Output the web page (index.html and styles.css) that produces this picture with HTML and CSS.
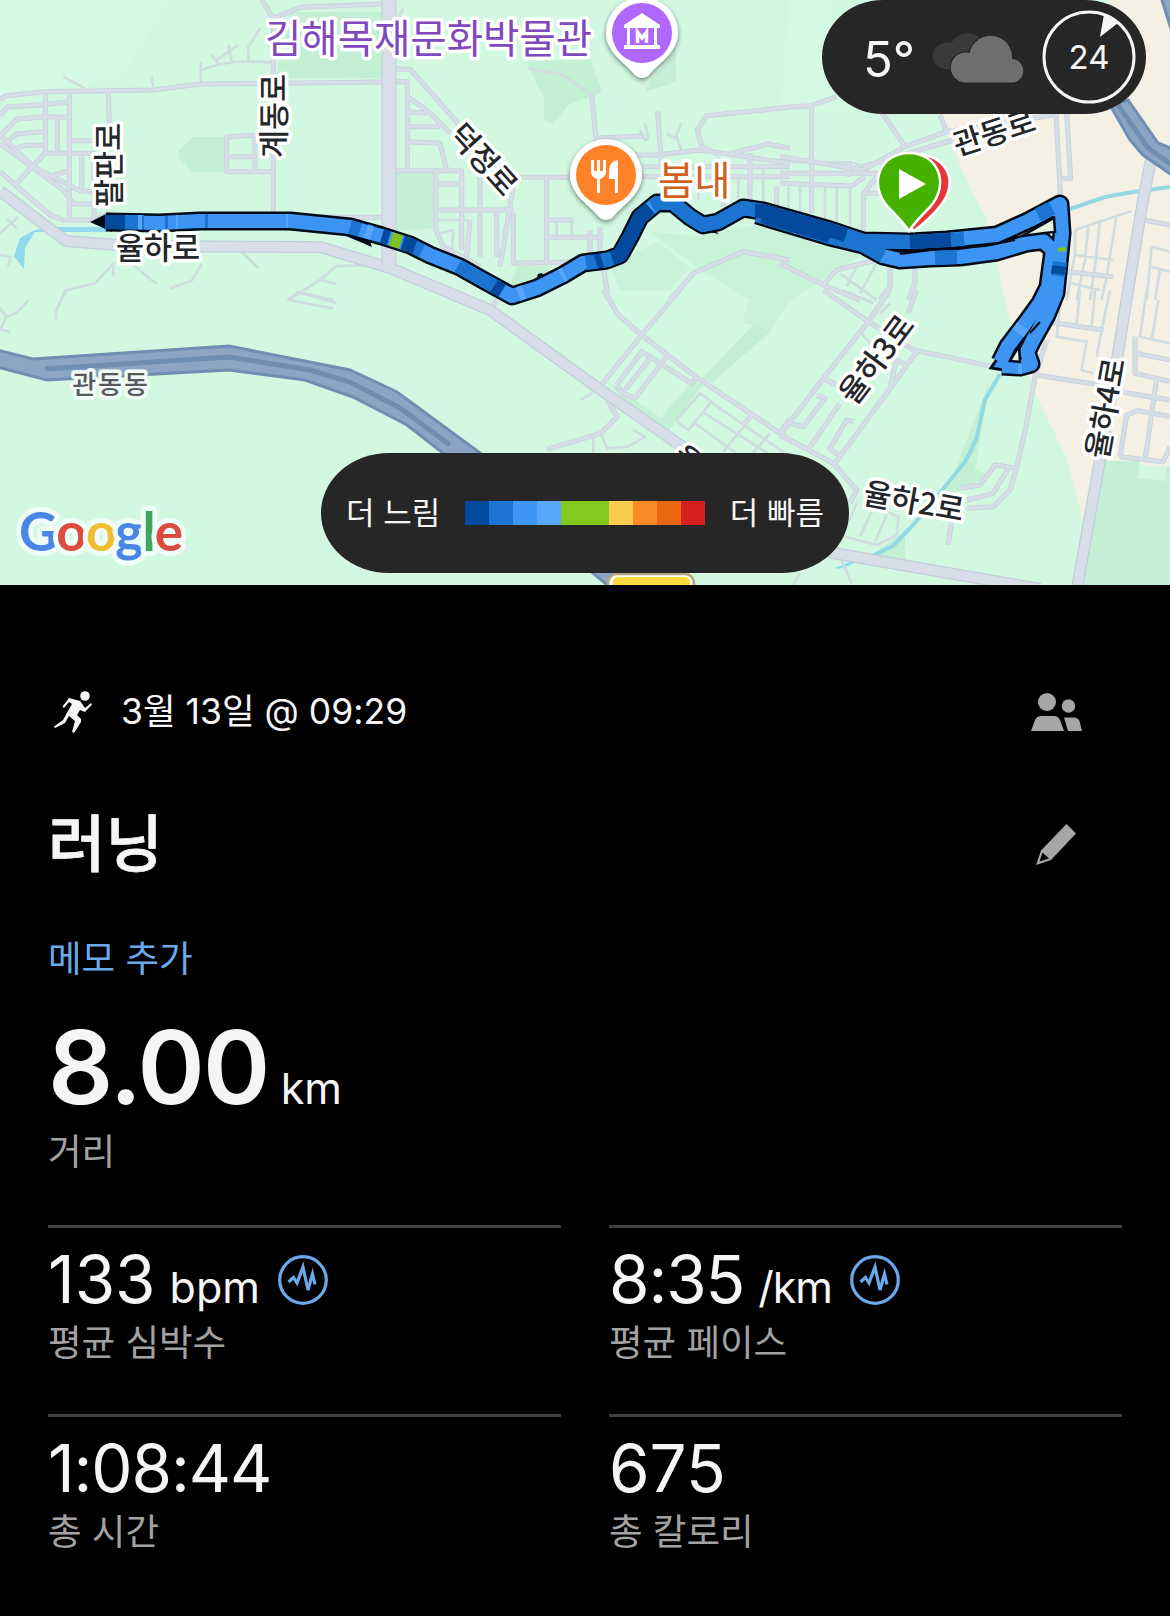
FILE: index.html
```html
<!DOCTYPE html>
<html lang="ko">
<head>
    <meta charset="UTF-8">
    <meta name="viewport" content="width=device-width, initial-scale=1.0">
    <title>러닝 | 3월 13일</title>
    <link rel="stylesheet" href="styles.css">
</head>
<body>
    <section class="map">
        <svg class="map-canvas" viewBox="0 0 1170 585">
            <defs>
                <filter id="pin-shadow" x="-20%" y="-20%" width="140%" height="150%">
                    <feDropShadow dx="0" dy="2" stdDeviation="2.5" flood-color="#000" flood-opacity=".5"/>
                </filter>

                <!-- side streets, one group per map tile -->
                <g id="streets">
                    <g transform="scale(.33333)">
                        <path d="M785 0L820 55V640M820 55L900 22L1150 12M0 300L15 288L130 275L460 270L600 252L1150 246M325 278L328 380M136 275V460M208 275V650M0 345L25 320L130 314L205 306M0 408L50 358L130 350L205 352M172 355V460M15 430L50 402L130 395M35 445L80 436H130M50 550L135 460H290M208 422H290M0 405L100 500L240 572L290 575M0 430L190 570L220 612H290M245 470V570M150 530L205 512M0 515L150 645L190 660H290M282 480V660L330 640M820 515H680V410L780 405M765 410V515M685 470H765M900 652H1145M1190 205H1200M1190 512H1200"/>
                    </g>
                    <g transform="translate(390 0) scale(.33333)">
                        <path d="M20 208H60L90 240L230 400M20 245H52V512M52 290L110 330L180 400M52 335L110 340M52 380H150M52 425L150 430L170 510M20 512H215V750M270 530V770M138 512V690L160 740L270 800M138 552H210M138 630H370M370 560L330 800M320 640V770M240 660L230 770M370 640V790L580 785M385 532H545M470 532V785M470 660H550M470 712H640M600 690V780M605 285L618 420M610 415L760 408M803 335L815 500M720 465H800L930 450L1200 490M1200 322L950 347L922 390L935 440L990 465M1080 460V610M1020 462L1135 432L1200 445M760 500H1200M740 530H1200M1000 560V620M1160 560V620M840 900L910 820L1060 755L1200 780M640 800L655 900M630 680V760"/>
                    </g>
                    <g transform="translate(780 0) scale(.33333)">
                        <path d="M0 323L95 317V640M95 317L170 290M300 330L375 440L250 510L0 470M375 440L500 395L480 345M500 395L820 345M0 520H300L250 580V700M0 550L215 558L255 530M250 580H300M205 485V530M250 500L520 420M828 340L842 600M860 340L872 535H845M0 790L130 855L240 900M130 855L170 810L330 770M330 770V860L300 900M405 780V850L385 900M860 815L1000 830M1090 660L1170 675"/>
                    </g>
                    <g transform="translate(390 290) scale(.33333)">
                        <path d="M640 0L685 75L755 135L920 262L1200 450M870 0L755 135L630 290M680 285L755 185L905 280L920 262M680 285L700 310L735 325L830 200M705 300L780 205M640 310L682 380L632 430L470 478M320 30L300 60M1085 375L1060 405M1170 430L1200 385"/>
                    </g>
                    <g transform="translate(780 290) scale(.33333)">
                        <path d="M330 0L265 95L130 265L0 435M410 0L385 70M130 0L265 95L400 180L640 230M410 185L320 310L165 520M180 340L80 485M0 435L160 520L230 600L210 640M110 315L135 325L70 410L25 400M220 395L200 390L150 475L175 495M130 265L190 295M330 290L350 210L380 225M800 150L765 260L740 400L710 535L690 600L640 650L560 655M710 535L645 525L600 585L540 595M685 535L640 610L560 630M515 690L505 765M770 255L960 285M1020 305L1170 330M820 98L970 120M1070 190L1170 210M1065 140V250L1170 275M1130 265L1095 510M1020 500L1150 515L1170 470M1020 500L1040 375L1075 362L1170 380"/>
                    </g>
                </g>

                <g id="lanes">
                    <g transform="scale(.33333)">
                        <path d="M190 230L255 265M455 230L460 262M602 185V245M602 212Q680 175 815 188M635 165L655 190M650 180L715 135M685 135L695 185M745 180V140L780 85M0 700L55 650M0 765L30 770L25 800M185 900L200 870L285 850L340 790V830M400 795L470 852M510 865L575 842L605 792M725 755L775 805M1120 795L1010 798L960 840L865 900M960 840L1010 852M890 875L1000 900M20 655L50 685"/>
                    </g>
                    <g transform="translate(390 0) scale(.33333)">
                        <path d="M415 205L520 225L605 285M750 390L765 420L775 415L765 370M830 400L855 415L875 368M860 410L875 455M10 85L40 25M130 660H230M150 700L190 690L185 750M500 660V705M545 660V705M880 610L860 500M925 600V560M1045 620V540M1120 620V500"/>
                    </g>
                    <g transform="translate(780 0) scale(.33333)">
                        <path d="M25 560V630M60 560V640M135 560V660M170 560V670M210 560V690M0 485L215 487L250 500M885 690L1055 633M885 690V760L860 900M925 675L915 780L890 900M960 660L945 800L930 900M1010 645L980 830L965 900M885 765L1000 780M875 850L960 870M1115 740L1170 755M1115 740L1100 900M1110 800L1170 815M1140 810L1125 900M180 820L290 900M230 800L200 860M290 790L240 880"/>
                    </g>
                    <g transform="translate(0 290) scale(.33333)">
                        <path d="M0 120L20 80L0 55M20 80L50 68L85 32M0 118L32 126M195 0L168 65V90M895 5L865 30L1000 55M890 5L1010 40"/>
                    </g>
                    <g transform="translate(390 290) scale(.33333)">
                        <path d="M570 330L610 308M610 440V490M635 435L650 475L715 470L765 440L730 420M860 390L930 310L965 335L895 420L860 395M960 335L1200 500M935 365L1150 500M915 400L1040 490M1065 405L1000 485M1140 430L1080 500"/>
                    </g>
                    <g transform="translate(780 290) scale(.33333)">
                        <path d="M190 0L280 40M240 125L270 160M300 70L330 40M845 0L830 140L915 155M900 0L890 100M945 0L935 110M990 0L965 120L950 200M920 150L905 240L940 250M1100 0L1080 140L1170 160M1135 30L1115 150M195 740L290 765L350 735L355 680L310 660M240 740L275 665M285 755L320 675M60 850L40 885M180 800L215 880M230 640L195 720"/>
                    </g>
                </g>
            </defs>

            <rect class="land" width="1170" height="585"/>
            <path class="woods soft" d="M0 0H170L120 80L0 95ZM790 0H830L850 110H780Z"/>
            <path class="town" d="M1110 0H1170V467L1100 462L1083 523L1077 497L1067 460L1047 417L1035 393L1013 330L1002 290L997 263L987 220L970 187L953 150L937 110Z"/>
            <path class="woods" d="M290 12L382 12V78H276ZM193 137H224V172H193L179 158V150ZM527 62L590 58L602 92L568 105L553 124L544 120V98L531 72ZM650 82L676 50V82L645 92ZM396 171H434V228L397 231ZM510 285L517 266H550L537 285ZM760 318L790 295L770 332L712 383L702 378ZM610 384L620 389L660 418L692 382L703 384L667 433L625 402ZM1101 461H1140L1138 478L1164 481L1167 467H1170V585H1082ZM990 380L975 470L990 475L940 500L955 470ZM905 530L905 560L860 565Z"/>
            <path class="woods light" d="M610 264L658 242L690 268L670 290H620ZM650 232L700 236L755 225L860 256L790 300L770 330L742 322L750 300L700 270Z"/>

            <path class="water" d="M55 227H108V232H52L35 232L25 248L24 269L14 256L20 238L35 230Z"/>
            <path class="stream" d="M1067 210L1105 197L1133 192L1170 187M1000 374L985 400L976 440L965 462L915 523L893 546L870 557"/>
            <path class="water" d="M835 568L872 553L848 566L837 569Z"/>

            <use href="#lanes" class="lane"/>
            <use href="#streets" class="street-edge"/>
            <use href="#streets" class="street"/>

            <g class="avenue-edge">
                <path d="M0 191L66 241L130 246L320 247L390 268L490 310L598 388L690 452L770 525L833 553L1040 589"/>
                <path d="M1152 155L1143 200L1127 297L1118 353L1100 460L1077 588"/>
            </g>
            <g class="avenue">
                <path d="M0 191L66 241L130 246L320 247L390 268L490 310L598 388L690 452L770 525L833 553L1040 589"/>
                <path d="M1152 155L1143 200L1127 297L1118 353L1100 460L1077 588"/>
            </g>
            <path class="trunk-edge" d="M389 -2V266"/>
            <path class="trunk" d="M389 -4V268"/>

            <g class="highway">
                <path d="M-3 350L33 359L229 346L350 370L397 392L480 453L625 573V600L593 573L443 453L407 425L353 397L305 380L229 370L47 380L-3 367Z"/>
                <path class="highway-gap" d="M45 369L229 357L310 370L350 382L400 408L450 445"/>
                <path d="M1110 105L1130 140L1143 155L1175 177V150L1158 143L1128 100ZM1161 -3L1173 35V-3Z"/>
                <path class="highway-gap" d="M1118 105L1148 148L1172 165"/>
            </g>

            <rect class="shield-edge" x="608" y="574" width="86" height="40" rx="9"/>
            <rect class="shield" x="613" y="577" width="77" height="40" rx="5"/>

            <!-- run track, coloured by pace -->
            <path class="track-edge" d="M90 222L108 213L112 232ZM1060 196L1068 202L1052 208ZM346 236L372 247L369 238ZM538 274L542 273L547 281L535 284ZM705 231L719 234L710 226Z"/>
            <g class="track-edge line">
                <path d="M106 222L160 223L200 221L290 221L350 227L382 236L410 245L430 255L460 267L483 280L512 296L537 288L563 275L583 263L607 260L620 255L630 237L640 217L657 203L673 203L690 217L703 225L718 222L743 208L763 211L830 230L863 241L910 242L947 240L997 235L1030 220L1060 204L1062 233L1058 273L1056 293L1047 315L1033 340L1027 352L1031 364L1020 367L1002 366"/>
                <path d="M757 215L830 237L863 245L883 256L900 260L930 258L960 257L997 252L1027 243L1043 241L1053 250L1048 287L1040 303L1024 325L1008 346L1000 362"/>
            </g>
            <path class="track-tip" d="M991 368L1001 353L1013 360L1010 371Z"/>
            <g class="track">
                <path d="M106 222L160 223L200 221L290 221L350 227L382 236L410 245L430 255L460 267L483 280L512 296L537 288L563 275L583 263L607 260L620 255L630 237L640 217L657 203L673 203L690 217L703 225L718 222L743 208L763 211L830 230L863 241L910 242L947 240L997 235L1030 220L1060 204L1062 233L1058 273L1056 293L1047 315L1033 340L1027 352L1031 364L1020 367L1002 366"/>
                <path d="M757 215L830 237L863 245L883 256L900 260L930 258L960 257L997 252L1027 243L1043 241L1053 250L1048 287L1040 303L1024 325L1008 346L1000 362"/>
            </g>
            <g class="track pace-2">
                <path d="M120 222L144 222M165 223L168 223M205 221L208 221M350 227L360 230M402 243L410 245L422 251M458 266L483 280L498 288M586 263L607 260L620 255M652 206L657 203L673 203L690 217L703 225L718 222L743 208L763 211L830 230L863 241L912 242M757 215L830 237L863 245L883 256M935 258L957 257M1038 215L1052 208M1060 262L1058 276M950 240L964 239"/>
            </g>
            <g class="track pace-1">
                <path d="M105 222L125 222M382 236L389 238M403 243L415 247M494 286L502 291M596 262L602 260M612 258L620 255L630 237L640 217L650 208M755 211L763 211L830 230L846 235M762 216L830 236M910 242L951 240M1059 266L1058 274"/>
            </g>
            <g class="track pace-4">
                <path d="M138 222L142 222M176 222L178 222M286 221L288 221M366 231L372 233M518 294L524 292M561 276L565 274M1018 333L1023 326M1018 367L1022 367"/>
            </g>
            <path class="track pace-5" d="M391 239L401 242"/>
            <path class="track pace-5 thin" d="M1058 250L1066 249"/>
            <path class="track-edge thin" d="M900 254L940 249L985 246L1015 240M1040 322L1030 333"/>
            <path class="gap" d="M1054 218L1055 232L1045 233L1022 236Z"/>
            <path class="gap" d="M1010 361L1019 346L1020 362Z"/>

            <g class="label">
                <text class="poi museum" x="265" y="53">김해목재문화박물관</text>
                <text class="poi food" x="658" y="195">봄내</text>
                <text class="road" transform="translate(273 116) rotate(-90)" dy=".38em">계동로</text>
                <text class="road" transform="translate(108 165) rotate(-90)" dy=".38em">팔판로</text>
                <text class="road" transform="translate(158 247) " dy=".38em">율하로</text>
                <text class="road" transform="translate(484 159) rotate(48)" dy=".38em">덕정로</text>
                <text class="road" transform="translate(994 132) rotate(-18)" dy=".38em">관동로</text>
                <text class="road" transform="translate(876 359) rotate(-53)" dy=".38em">율하3로</text>
                <text class="road" transform="translate(1105 408) rotate(-80)" dy=".38em">율하4로</text>
                <text class="road" transform="translate(914 501) rotate(10)" dy=".38em">율하2로</text>
                <text class="road" transform="translate(688 460) rotate(40)" dy=".38em">율</text>
                <text class="district" transform="translate(111 384)" dy=".38em">관동동</text>
            </g>

            <g transform="translate(642 33)">
                <path class="pin" filter="url(#pin-shadow)" d="M-36 0A36 36 0 0 1 36 0C36 20 14 32 7 42Q0 48 -7 42C-14 32 -36 20 -36 0Z"/>
                <circle class="pin-museum" r="30"/>
                <path fill="#fff" d="M0 -20L18 -8V-5H15V12H18V16H-18V12H-15V-5H-18V-8ZM-12 -5V12H12V-5Z" fill-rule="evenodd"/>
                <path class="pin-line" d="M-4.500 10V-1L0 5L4.500 -1V10"/>
            </g>
            <g transform="translate(606 175)">
                <path class="pin" filter="url(#pin-shadow)" d="M-36 0A36 36 0 0 1 36 0C36 20 14 32 7 42Q0 48 -7 42C-14 32 -36 20 -36 0Z"/>
                <circle class="pin-food" r="30"/>
                <path fill="#fff" d="M-15 -15H-12V-4H-9V-15H-6V-4H-3V-15H0V-3Q0 2 -6 4V18H-9V4Q-15 2 -15 -3ZM12 -15V18H9V4H3V-5Q4 -14 12 -15Z"/>
            </g>
            <g class="start">
                <path class="finish-pin" d="M914 231L886 203C871 183 884 154 915 154S960 181 941 205Q931 218 914 231Z"/>
                <path class="start-pin" d="M909 231Q903 222 888 207C867 183 881 153 909 153S951 183 930 207Q915 222 909 231Z"/>
                <path fill="#fff" d="M899 169V199L926 184Z"/>
            </g>

            <text class="google" x="19" y="551" textLength="164"><tspan class="g-blue">G</tspan><tspan class="g-red">o</tspan><tspan class="g-yellow">o</tspan><tspan class="g-blue">g</tspan><tspan class="g-green">l</tspan><tspan class="g-red">e</tspan></text>
        </svg>

        <div class="weather">
            <span class="temp">5°</span>
            <svg class="clouds" viewBox="0 0 94 54" width="94" height="54">
                <path fill="#3a3a3a" d="M14 39A13 13 0 0 1 13 13Q16 12 19 13A19 19 0 0 1 54 18L30 39Z"/>
                <path fill="#6e6e6e" stroke="#262626" stroke-width="2.500" paint-order="stroke" d="M33 52.500A15 15 0 1 1 37.500 23A21.500 21.500 0 0 1 80 29A11.800 11.800 0 0 1 81 52.500Z"/>
            </svg>
            <div class="wind">
                <svg viewBox="0 0 94 94" width="94" height="94">
                    <circle cx="47" cy="47" r="45" fill="none" stroke="#f5f5f5" stroke-width="3"/>
                    <path fill="#f5f5f5" d="M62 4L76 13L58 27Z"/>
                </svg>
                <span>24</span>
            </div>
        </div>

        <div class="legend">
            <span>더 느림</span>
            <div class="scale">
                <i class="s1"></i><i class="s2"></i><i class="s3"></i><i class="s4"></i><i class="s5"></i>
                <i class="s6"></i><i class="s7"></i><i class="s8"></i><i class="s9"></i>
            </div>
            <span>더 빠름</span>
        </div>
    </section>

    <main class="details">
        <div class="row date-row">
            <svg class="runner" viewBox="0 0 39 42" width="39" height="42">
                <circle cx="31" cy="5" r="4.800"/>
                <path d="M15 7L26 10L29 14L31 17L37 12L38 13.500L31 21L26 19L23 24L27 28L27 31L20 42L18 41L21 30L15 25L11 32L1 37L0 35.500L9 29L14 20L18 13L15 11L10 17L8.500 15.500Z"/>
            </svg>
            <span class="date">3월 13일 @ 09:29</span>
            <svg class="people" viewBox="0 0 51 38" width="51" height="38">
                <circle cx="16" cy="9" r="9"/>
                <circle cx="37.500" cy="13" r="6.700"/>
                <path d="M0 38L4 27Q6 23 10 23H23Q27 23 29 27L33 38ZM33 24.500H43Q47 24.500 48.500 28L51 38H37Z"/>
            </svg>
        </div>

        <div class="row title-row">
            <h1>러닝</h1>
            <svg class="pencil" viewBox="0 0 40 41" width="40" height="41">
                <path fill-rule="evenodd" d="M30.500 0L40 9.500L15 36L0 41L5 26.500ZM6.500 28.500L3.500 37.500L13 34.500Z"/>
            </svg>
        </div>

        <a class="memo">메모 추가</a>

        <div class="distance">
            <p class="total"><b>8.00</b> <span>km</span></p>
            <p class="caption">거리</p>
        </div>

        <div class="stats">
            <div class="stat">
                <p class="value"><b>133</b><span>bpm</span>
                    <svg class="chart-icon" viewBox="0 0 50 50" width="50" height="50">
                        <circle cx="25" cy="25" r="23.300"/>
                        <path d="M10.500 27L15.500 22.500L19 28L25 12L30 35L34.500 19L37 29.500"/>
                    </svg>
                </p>
                <p class="caption">평균 심박수</p>
            </div>
            <div class="stat">
                <p class="value time"><b>8:35</b><span>/km</span>
                    <svg class="chart-icon" viewBox="0 0 50 50" width="50" height="50">
                        <circle cx="25" cy="25" r="23.300"/>
                        <path d="M10.500 27L15.500 22.500L19 28L25 12L30 35L34.500 19L37 29.500"/>
                    </svg>
                </p>
                <p class="caption">평균 페이스</p>
            </div>
            <div class="stat">
                <p class="value time"><b>1:08:44</b></p>
                <p class="caption">총 시간</p>
            </div>
            <div class="stat">
                <p class="value"><b>675</b></p>
                <p class="caption">총 칼로리</p>
            </div>
        </div>
    </main>
</body>
</html>
```
FILE: styles.css
```css
* {
    box-sizing: border-box;
    margin: 0;
}

body {
    background: #000;
    color: #f5f5f5;
    font-family: Inter, "Noto Sans CJK KR", sans-serif;
    height: 1616px;
    overflow: hidden;
}

svg {
    flex: none;
}

/* map */
.map {
    position: relative;
    height: 585px;
    overflow: hidden;
}

.map-canvas {
    display: block;
    width: 1170px;
    height: 585px;
}

.land { fill: #d2f8e2; }
.town { fill: #f5f0e4; }
.woods { fill: #c3efd4; }
.woods.soft { fill: #d5f9e4; }
.woods.light { fill: #c8f3d9; }
.water { fill: #8fdaec; }

.stream {
    fill: none;
    stroke: #93d9e3;
    stroke-width: 4;
}

.lane,
.street,
.street-edge,
.avenue,
.avenue-edge {
    fill: none;
    stroke-linejoin: round;
}

.lane {
    stroke: #cfdde1;
    stroke-width: 8;
}

.street-edge {
    stroke: #c6d0dc;
    stroke-width: 15;
}

.street {
    stroke: #d5dde5;
    stroke-width: 11;
}

.avenue-edge { stroke: #c4cddb; stroke-width: 12; }
.avenue { stroke: #d8dee8; stroke-width: 9.5; }
.trunk-edge { stroke: #c4cddb; stroke-width: 15; }
.trunk { stroke: #d8dee8; stroke-width: 13; }

.highway {
    fill: #8ca5c4;
    stroke: #6f8eb2;
    stroke-width: 3;
}

.highway-gap {
    fill: none;
    stroke-width: 5;
}

.shield-edge { fill: #fff; stroke: #b5a77c; stroke-width: 2.5; }
.shield { fill: #fdd940; }

.track-edge { fill: #020a18; }

.track-edge.line {
    fill: none;
    stroke: #020a18;
    stroke-width: 19;
}

.track-edge.thin {
    fill: none;
    stroke: #020a18;
    stroke-width: 2;
}

.track {
    fill: none;
    stroke: #3c95f2;
    stroke-width: 14;
}

.track-tip {
    fill: #3c95f2;
    stroke: #020a18;
    stroke-width: 3;
}

.gap {
    fill: #e4f4e3;
    stroke: #020a18;
    stroke-width: 2.5;
}

.line,
.track {
    stroke-linejoin: round;
}

.pace-1 { stroke: #034a9f; }
.pace-2 { stroke: #1b74d0; }
.pace-4 { stroke: #56a7fb; }
.pace-5 { stroke: #80c21e; }
.track.thin { stroke-width: 4; }

.label {
    fill: #24272a;
    stroke: #fff;
    stroke-width: 7;
    stroke-linejoin: round;
    paint-order: stroke;
    font-family: "Noto Sans CJK KR", sans-serif;
}

.poi { font-size: 39.5px; }
.museum { fill: #7f49bd; }
.food { fill: #d1611c; }

.road {
    font-size: 30.5px;
    font-weight: 500;
    text-anchor: middle;
}

.district {
    fill: #55595c;
    stroke: #f0fbf8;
    font-size: 26px;
    font-weight: 500;
    letter-spacing: 2px;
    text-anchor: middle;
}

.pin { fill: #fff; }
.pin-museum { fill: #b067fd; }
.pin-food { fill: #ff8228; }

.pin-line {
    fill: none;
    stroke: #fff;
    stroke-width: 3.5;
}

.start-pin,
.finish-pin {
    fill: #46b200;
    stroke: #fff;
    stroke-width: 2.5;
}

.finish-pin { fill: #e8353b; }

.google {
    font-family: Lato, sans-serif;
    font-size: 53px;
    font-weight: 700;
    stroke: #effcf8;
    stroke-width: 10;
    stroke-linejoin: round;
    paint-order: stroke;
}

.g-blue { fill: #4a86e4; }
.g-red { fill: #db4b3f; }
.g-yellow { fill: #f2bd30; }
.g-green { fill: #3fa65a; }

/* overlays */
.weather {
    position: absolute;
    top: 0;
    left: 822px;
    width: 324px;
    height: 114px;
    padding: 0 10px 0 41px;
    border-radius: 61px / 57px;
    background: #262626;
    display: flex;
    align-items: center;
}

.temp {
    width: 69px;
    padding-top: 4px;
    font-size: 49px;
}

.wind {
    display: grid;
    place-items: center;
    margin-left: auto;
    font-size: 33px;
}

.wind > * {
    grid-area: 1 / 1;
}

.legend {
    position: absolute;
    top: 453px;
    left: 321px;
    width: 528px;
    height: 120px;
    padding: 0 25px;
    border-radius: 68px / 60px;
    background: #262626;
    display: flex;
    align-items: center;
    justify-content: space-between;
    font-size: 31px;
}

.legend span {
    padding-bottom: 6px;
}

.scale {
    display: flex;
    width: 240px;
    height: 24px;
}

.scale i { flex: 1; }
.scale .s1 { background: #034a9f; }
.scale .s2 { background: #1c75d2; }
.scale .s3 { background: #3d96f3; }
.scale .s4 { background: #57a8fd; }
.scale .s5 { background: #82cb1c; flex: 2; }
.scale .s6 { background: #f9cc50; }
.scale .s7 { background: #f98a28; }
.scale .s8 { background: #ea670f; }
.scale .s9 { background: #d62020; }

/* details */
.details {
    padding: 102px 48px 0;
}

.row {
    display: flex;
    align-items: center;
}

.date-row {
    height: 50px;
    padding: 0 40px 0 6px;
    font-size: 35.5px;
    line-height: 50px;
}

.runner {
    fill: #f5f5f5;
    margin-right: 28px;
}

.people,
.pencil {
    fill: #a6a6a6;
    margin-left: auto;
}

.title-row {
    height: 80px;
    margin-top: 67px;
    padding-right: 46px;
}

h1 {
    font-size: 62.5px;
    font-weight: 500;
    line-height: 80px;
    -webkit-text-stroke: .8px #f5f5f5;
}

.memo {
    display: block;
    margin-top: 50px;
    color: #69a9ec;
    font-size: 36.5px;
    line-height: 50px;
}

.distance {
    height: 213px;
    margin-top: 28px;
}

.total {
    height: 110px;
    font-size: 43px;
    line-height: 110px;
}

.total b {
    font-size: 102px;
    font-weight: 600;
    letter-spacing: -1.7px;
}

.caption {
    color: #a2a2a2;
    font-size: 36.5px;
    line-height: 50px;
}

.distance .caption {
    margin-top: 5px;
}

.stats {
    display: grid;
    grid-template-columns: 1fr 1fr;
    gap: 47px 48px;
}

.stat {
    height: 142px;
    border-top: 3px solid #404040;
    padding-top: 14px;
}

.value {
    display: flex;
    align-items: baseline;
    height: 76px;
    font-size: 43px;
    line-height: 76px;
}

.value b {
    font-size: 65.5px;
    font-weight: 400;
    margin-right: 14px;
}

.time,
.time b {
    letter-spacing: -1.1px;
}

.chart-icon {
    align-self: center;
    margin-left: 18px;
    fill: none;
    stroke: #69a9ec;
    stroke-width: 3.2;
}
```
